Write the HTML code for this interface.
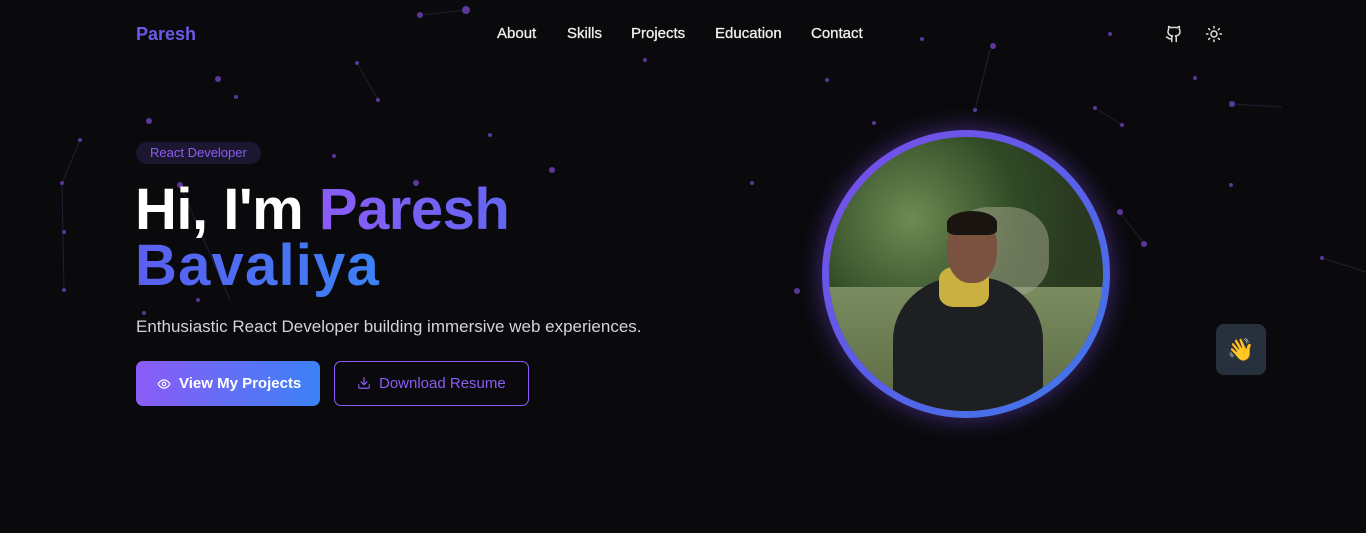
<!DOCTYPE html>
<html><head><style>
*{margin:0;padding:0;box-sizing:border-box}
body{width:1366px;height:533px;background:#0a0a0d;font-family:"Liberation Sans",sans-serif;position:relative;overflow:hidden;color:#fff}
.a{position:absolute}
.nav a{position:absolute;top:25px;font-size:15px;color:#f0f0f0;-webkit-text-stroke:0.3px #f0f0f0}
</style></head><body>
<svg class="a" style="left:0;top:0" width="1366" height="533">
<g stroke="#221e30" stroke-width="1">
<line x1="62" y1="183" x2="80" y2="140"/><line x1="62" y1="183" x2="64" y2="290"/><line x1="357" y1="63" x2="378" y2="100"/><line x1="1120" y1="212" x2="1144" y2="244"/><line x1="1232" y1="104" x2="1282" y2="107"/><line x1="1322" y1="258" x2="1366" y2="272"/><line x1="990" y1="50" x2="975" y2="110"/><line x1="420" y1="15" x2="466" y2="10"/><line x1="180" y1="185" x2="230" y2="300"/><line x1="1095" y1="108" x2="1122" y2="125"/>
</g>
<g fill="#5c3799">
<circle cx="466" cy="10" r="4"/><circle cx="420" cy="15" r="3"/><circle cx="357" cy="63" r="2"/><circle cx="378" cy="100" r="2"/><circle cx="236" cy="97" r="2"/><circle cx="218" cy="79" r="3"/><circle cx="149" cy="121" r="3"/><circle cx="80" cy="140" r="2"/><circle cx="62" cy="183" r="2"/><circle cx="64" cy="232" r="2"/><circle cx="64" cy="290" r="2"/><circle cx="180" cy="185" r="3"/><circle cx="416" cy="183" r="3"/><circle cx="552" cy="170" r="3"/><circle cx="490" cy="135" r="2"/><circle cx="334" cy="156" r="2"/><circle cx="198" cy="300" r="2"/><circle cx="144" cy="313" r="2"/><circle cx="645" cy="60" r="2"/><circle cx="752" cy="183" r="2"/><circle cx="797" cy="291" r="3"/><circle cx="827" cy="80" r="2"/><circle cx="874" cy="123" r="2"/><circle cx="922" cy="39" r="2"/><circle cx="993" cy="46" r="3"/><circle cx="975" cy="110" r="2"/><circle cx="1095" cy="108" r="2"/><circle cx="1122" cy="125" r="2"/><circle cx="1110" cy="34" r="2"/><circle cx="1232" cy="104" r="3"/><circle cx="1231" cy="185" r="2"/><circle cx="1144" cy="244" r="3"/><circle cx="1120" cy="212" r="3"/><circle cx="1322" cy="258" r="2"/><circle cx="1195" cy="78" r="2"/>
</g>
</svg>
<div class="a" style="left:136px;top:24px;font-size:18px;font-weight:bold;color:#6a5ae8">Paresh</div>
<div class="nav"><a style="left:497px">About</a><a style="left:567px">Skills</a><a style="left:631px">Projects</a><a style="left:715px">Education</a><a style="left:811px">Contact</a></div>
<svg class="a" style="left:1165px;top:25px" width="18" height="18" viewBox="0 0 24 24" fill="none" stroke="#ddd" stroke-width="2" stroke-linecap="round" stroke-linejoin="round"><path d="M15 22v-4a4.8 4.8 0 0 0-1-3.5c3 0 6-2 6-5.5.08-1.25-.27-2.48-1-3.5.28-1.150.28-2.35 0-3.5 0 0-1 0-3 1.5-2.64-.5-5.36-.5-8 0C6 2 5 2 5 2c-.3 1.15-.3 2.35 0 3.5A5.4 5.4 0 0 0 4 9c0 3.5 3 5.5 6 5.5-.39.49-.68 1.05-.85 1.65S8.93 17.38 9 18v4"/><path d="M9 18c-4.51 2-5-2-7-2"/></svg>
<svg class="a" style="left:1205px;top:25px" width="18" height="18" viewBox="0 0 24 24" fill="none" stroke="#ddd" stroke-width="2" stroke-linecap="round"><circle cx="12" cy="12" r="4"/><path d="M12 2v2M12 20v2M4.9 4.9l1.4 1.4M17.7 17.7l1.4 1.4M2 12h2M20 12h2M6.3 17.7l-1.4 1.4M19.1 4.9l-1.4 1.4"/></svg>
<div class="a" style="left:136px;top:142px;height:22px;padding:0 14px;border-radius:11px;background:#1c1730;color:#8b5cf6;font-size:13px;line-height:22px">React Developer</div>
<div class="a" style="left:135px;top:182px;font-size:58px;font-weight:bold;line-height:56px;letter-spacing:-0.5px">Hi, I'm <span style="background:linear-gradient(90deg,#8b5cf6,#6366f1);-webkit-background-clip:text;color:transparent">Paresh</span><br><span style="letter-spacing:1.2px;background:linear-gradient(90deg,#5b5ef0,#3b82f6);-webkit-background-clip:text;color:transparent">Bavaliya</span></div>
<div class="a" style="left:136px;top:317px;font-size:17px;color:#d4d4d8">Enthusiastic React Developer building immersive web experiences.</div>
<div class="a" style="left:136px;top:361px;width:184px;height:45px;border-radius:7px;background:linear-gradient(90deg,#8b5cf6,#3b82f6);font-size:15px;font-weight:bold;line-height:45px;padding-left:43px">View My Projects</div>
<svg class="a" style="left:157px;top:377px" width="14" height="14" viewBox="0 0 24 24" fill="none" stroke="#fff" stroke-width="2"><path d="M2 12s3.5-7 10-7 10 7 10 7-3.5 7-10 7S2 12 2 12z"/><circle cx="12" cy="12" r="3"/></svg>
<div class="a" style="left:334px;top:361px;width:195px;height:45px;border-radius:7px;border:1px solid #8b5cf6;font-size:15px;color:#8b5cf6;line-height:43px;padding-left:44px">Download Resume</div>
<svg class="a" style="left:357px;top:376px" width="14" height="14" viewBox="0 0 24 24" fill="none" stroke="#8b5cf6" stroke-width="2" stroke-linecap="round"><path d="M21 15v4a2 2 0 0 1-2 2H5a2 2 0 0 1-2-2v-4M7 10l5 5 5-5M12 15V3"/></svg>
<div class="a" style="left:822px;top:130px;width:288px;height:288px;border-radius:50%;background:linear-gradient(135deg,#7c4dea,#5b5ee8 50%,#3b7be8);box-shadow:0 0 24px rgba(124,77,234,.5)"></div>
<div class="a" style="left:829px;top:137px;width:274px;height:274px;border-radius:50%;overflow:hidden;background:radial-gradient(circle at 30% 30%,#6f8a52,#2e4a25 40%,#2a3a20 60%);">
<div class="a" style="left:0;top:150px;width:274px;height:124px;background:linear-gradient(#7a8c60,#5c6a43)"></div>
<div class="a" style="left:120px;top:70px;width:100px;height:90px;background:#a8a890;opacity:.5;border-radius:40%"></div>
<div class="a" style="left:64px;top:140px;width:150px;height:140px;background:#1e1f22;border-radius:45% 45% 0 0"></div>
<div class="a" style="left:110px;top:130px;width:50px;height:40px;background:#c9b040;border-radius:30%"></div>
<div class="a" style="left:118px;top:78px;width:50px;height:68px;background:#7a5240;border-radius:45%"></div>
<div class="a" style="left:118px;top:74px;width:50px;height:24px;background:#1a1410;border-radius:50% 50% 20% 20%"></div>
</div>
<div class="a" style="left:1216px;top:324px;width:50px;height:51px;border-radius:8px;background:#27303d;font-size:22px;text-align:center;line-height:51px">👋</div>
</body></html>
